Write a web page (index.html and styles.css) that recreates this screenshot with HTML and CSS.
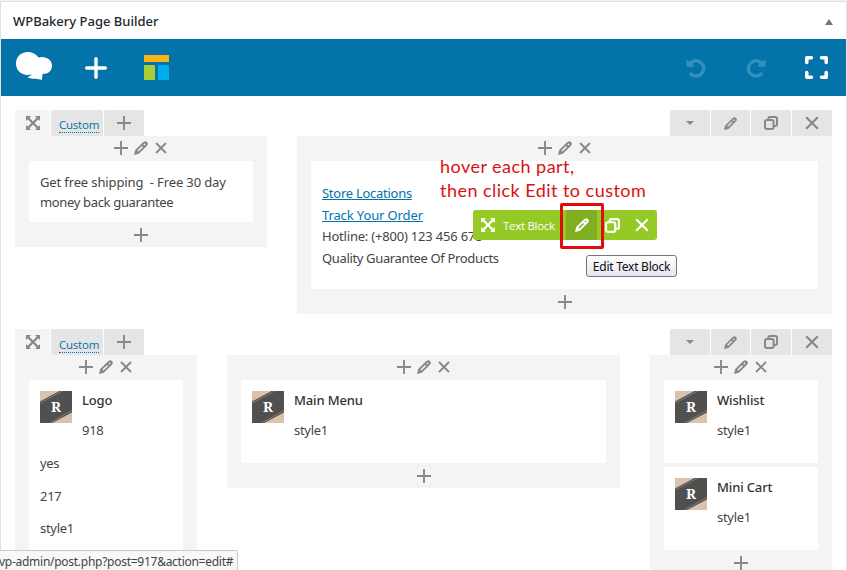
FILE: index.html
```html
<!DOCTYPE html>
<html lang="en">
<head>
<meta charset="utf-8">
<title>WPBakery Page Builder</title>
<link rel="stylesheet" href="styles.css">
</head>
<body>
<svg class="defs" aria-hidden="true">
  <symbol id="plus" viewBox="0 0 14 14"><path d="M7 0v14M0 7h14" fill="none" stroke="currentColor" stroke-width="1.9"/></symbol>
  <symbol id="close" viewBox="0 0 14 14"><path d="M1.2 1.200l11.600 11.600M12.800 1.200L1.200 12.800" fill="none" stroke="currentColor" stroke-width="2.200"/></symbol>
  <symbol id="pencil" viewBox="0 0 14 14"><path fill="currentColor" fill-rule="evenodd" d="M0 14L1.200 9.100 9.300 1Q11.300-.7 13 1T13 4.700L4.900 12.800ZM3.400 9.500L4.500 10.600 9.100 6 8 4.900ZM9.400 3.500L10.500 4.600 11.500 3.600 10.400 2.500Z"/></symbol>
  <symbol id="copy" viewBox="0 0 14 14"><g fill="none" stroke="currentColor" stroke-width="2"><rect x="1" y="4" width="8.600" height="9" rx="2"/><path d="M4.400 3.800V2.600Q4.400 1 6 1h5.300Q13 1 13 2.700v5.600Q13 10 11.400 10H10"/></g></symbol>
  <symbol id="move" viewBox="0 0 14 14"><path d="M2 2l10 10M12 2L2 12" stroke="currentColor" stroke-width="2.300"/><path fill="currentColor" d="M0 0h5L0 5zM14 0v5L9 0zM0 14V9l5 5zM14 14H9l5-5z"/></symbol>
  <symbol id="undo" viewBox="0 0 20 20"><path d="M4.500 5.200A7.600 7.600 0 1 1 4.800 16" fill="none" stroke="currentColor" stroke-width="3.500" stroke-linecap="round"/><path fill="currentColor" d="M.5 1.500v7.200h8.200L6.500 5.600 3 3z"/></symbol>
  <symbol id="thumb" viewBox="0 0 32 32"><path fill="#d9c3ad" d="M0 0h32v32H0z"/><path fill="#505050" d="M0 10.500L19.500 0H32v21.500L12 32H0z"/><path d="M0 12.200L22.500 0M9.500 32L32 19.500" stroke="#a08c7b" stroke-width=".7"/></symbol>
</svg>
<main class="panel">
  <header class="panel-head"><h2>WPBakery Page Builder</h2><span class="toggle"></span></header>
  <nav class="toolbar">
    <svg class="logo" viewBox="0 0 36 28"><path fill="#fff" d="M11.500 0C17 0 20.500 2.500 22.500 5.500 29.500 3.500 36 7.500 36 13.500c0 5-3.500 8.500-9.500 8.500L26 28c-4-1.500-9-.5-14.500-2.500l4.500-3C6 24.500 0 19 0 11.500 0 5 5 0 11.500 0z"/></svg>
    <svg class="add" viewBox="0 0 22 22"><path d="M11 1.700v18.600M1.700 11h18.600" stroke="#fff" stroke-width="3.400" stroke-linecap="round"/></svg>
    <svg class="template" viewBox="0 0 25 25"><path fill="#fcb316" d="M0 0h25v7H0z"/><path fill="#a9cd36" d="M0 10h11v15H0z"/><path fill="#00aeef" d="M14 10h11v15H14z"/></svg>
    <span class="spacer"></span>
    <svg class="history"><use href="#undo"/></svg>
    <svg class="history redo"><use href="#undo"/></svg>
    <svg class="full" viewBox="0 0 22 22"><path d="M1.700 6.200V1.700h4.500M15.800 1.700h4.500v4.500M20.300 15.800v4.500h-4.500M6.200 20.300H1.700v-4.500" fill="none" stroke="#fff" stroke-width="3.400" stroke-linecap="round" stroke-linejoin="round"/></svg>
  </nav>
  <div class="canvas">
    <section class="row first">
      <div class="tabs">
        <span class="tab drag"><svg class="i"><use href="#move"/></svg></span>
        <span class="tab custom"><a>Custom</a></span>
        <span class="tab"><svg class="i"><use href="#plus"/></svg></span>
        <span class="spacer"></span>
        <span class="tab"><i class="caret"></i></span>
        <span class="tab narrow"><svg class="i s13"><use href="#pencil"/></svg></span>
        <span class="tab"><svg class="i"><use href="#copy"/></svg></span>
        <span class="tab"><svg class="i"><use href="#close"/></svg></span>
      </div>
      <div class="columns">
        <div class="column shipping">
          <div class="controls"><svg class="i"><use href="#plus"/></svg><svg class="i"><use href="#pencil"/></svg><svg class="i s12"><use href="#close"/></svg></div>
          <article class="card text"><p><span class="l1">Get free shipping&nbsp; - Free 30 day</span><br><span class="l2">money back guarantee</span></p></article>
          <div class="append"><svg class="i"><use href="#plus"/></svg></div>
        </div>
        <div class="column contact">
          <div class="controls"><svg class="i"><use href="#plus"/></svg><svg class="i"><use href="#pencil"/></svg><svg class="i s12"><use href="#close"/></svg></div>
          <article class="card links"><p><a class="l3">Store Locations</a><br><a class="l4">Track Your Order</a><br><span class="l5">Hotline: (+800) 123 456 678</span><br><span class="l6">Quality Guarantee Of Products</span></p></article>
          <div class="append"><svg class="i"><use href="#plus"/></svg></div>
        </div>
      </div>
    </section>
    <section class="row">
      <div class="tabs">
        <span class="tab drag"><svg class="i"><use href="#move"/></svg></span>
        <span class="tab custom low"><a>Custom</a></span>
        <span class="tab"><svg class="i"><use href="#plus"/></svg></span>
        <span class="spacer"></span>
        <span class="tab"><i class="caret"></i></span>
        <span class="tab narrow"><svg class="i s13"><use href="#pencil"/></svg></span>
        <span class="tab"><svg class="i"><use href="#copy"/></svg></span>
        <span class="tab"><svg class="i"><use href="#close"/></svg></span>
      </div>
      <div class="columns">
        <div class="column side">
          <div class="controls"><svg class="i"><use href="#plus"/></svg><svg class="i"><use href="#pencil"/></svg><svg class="i s12"><use href="#close"/></svg></div>
          <article class="card element tall">
            <div class="media"><div class="thumb"><svg><use href="#thumb"/></svg><b>R</b></div><div><h4>Logo</h4><p>918</p></div></div>
            <p class="param">yes</p><p class="param">217</p><p class="param">style1</p>
          </article>
        </div>
        <div class="column menu">
          <div class="controls"><svg class="i"><use href="#plus"/></svg><svg class="i"><use href="#pencil"/></svg><svg class="i s12"><use href="#close"/></svg></div>
          <article class="card element"><div class="media"><div class="thumb"><svg><use href="#thumb"/></svg><b>R</b></div><div><h4>Main Menu</h4><p>style1</p></div></div></article>
          <div class="append"><svg class="i"><use href="#plus"/></svg></div>
        </div>
        <div class="column side">
          <div class="controls"><svg class="i"><use href="#plus"/></svg><svg class="i"><use href="#pencil"/></svg><svg class="i s12"><use href="#close"/></svg></div>
          <article class="card element"><div class="media"><div class="thumb"><svg><use href="#thumb"/></svg><b>R</b></div><div><h4>Wishlist</h4><p>style1</p></div></div></article>
          <article class="card element"><div class="media"><div class="thumb"><svg><use href="#thumb"/></svg><b>R</b></div><div><h4>Mini Cart</h4><p>style1</p></div></div></article>
          <div class="append"><svg class="i"><use href="#plus"/></svg></div>
        </div>
      </div>
    </section>
  </div>
</main>
<div class="note"><span>hover each part,</span><br><span>then click Edit to custom</span></div>
<div class="element-bar">
  <svg class="i"><use href="#move"/></svg><span class="name">Text Block</span>
  <span class="edit"><svg class="i"><use href="#pencil"/></svg></span>
  <span class="action"><svg class="i s15"><use href="#copy"/></svg></span>
  <span class="action"><svg class="i"><use href="#close"/></svg></span>
</div>
<div class="marker"></div>
<div class="tooltip">Edit Text Block</div>
<div class="status">vp-admin/post.php?post=917&amp;action=edit#</div>
</body>
</html>
```
FILE: styles.css
```css
* { box-sizing: border-box; }
body { margin: 0; width: 847px; height: 570px; overflow: hidden; position: relative; background: #f1f1f1; color: #444; font: 13px/21.5px "Noto Sans", sans-serif; padding-top: 1px; }
h2, h4, p { margin: 0; }
svg { display: block; flex: none; }
.defs { position: absolute; width: 0; height: 0; }
.i { width: 14px; height: 14px; }
.s12 { width: 12px; height: 12px; }
.s13 { width: 13px; height: 13px; }
.s15 { width: 15px; height: 15px; }
.spacer { flex: 1; }
.panel { height: 569px; overflow: hidden; border: 1px solid #e2e2e2; border-bottom: 0; background: #fff; }
.panel-head { height: 37px; padding: 2px 13px 0 12px; display: flex; align-items: center; justify-content: space-between; }
h2 { font-size: 13px; font-weight: 500; color: #23282d; white-space: nowrap; letter-spacing: 0; }
.toggle { border: 4px solid transparent; border-top: 0; border-bottom: 6px solid #72777c; }
.toolbar { height: 57px; padding: 0 18px 0 15px; background: #0473aa; display: flex; align-items: center; }
.logo { width: 36px; height: 28px; margin-top: -3px; }
.add { width: 22px; height: 22px; margin-left: 33px; }
.template { width: 25px; height: 25px; margin-left: 37px; }
.history { width: 20px; height: 20px; color: #338fbb; margin-right: 40px; }
.redo { transform: scaleX(-1); margin-right: 39px; }
.full { width: 23px; height: 23px; }
.canvas { padding: 14px; }
.row.first { height: 219px; }
.tabs { display: flex; gap: 1px; height: 26px; }
.tab { width: 40px; background: #e5e5e5; color: #888; display: flex; align-items: center; justify-content: center; border-radius: 2px 2px 0 0; }
.tab.narrow { width: 39px; }
.tab.drag { width: 35px; background: #f4f4f4; }
.tab.custom { width: 52px; padding: 4px 0 0 4px; }
.tab.low { padding-top: 6px; }
.custom a { font: 11.5px/14px "Open Sans", sans-serif; letter-spacing: -.2px; color: #0073aa; border-bottom: 1px dotted #0073aa; }
.caret { border: 4px solid transparent; border-top-color: #888; border-bottom: 0; }
.columns { display: flex; gap: 30px; align-items: flex-start; }
.column { background: #f4f4f4; padding: 0 14px; color: #888; }
.shipping { width: 252px; }
.contact { width: 535px; }
.side { width: 182px; }
.menu { width: 393px; }
.controls { height: 25px; padding-bottom: 1px; display: grid; grid-template-columns: repeat(3, 20px); justify-content: center; align-items: center; justify-items: center; }
.append { height: 25px; display: grid; place-items: center; padding-top: 1px; }
.card { background: #fff; border-radius: 2px; color: #444; white-space: nowrap; }
.card + .card { margin-top: 4px; }
.card.text { height: 61px; padding: 11px 11px; line-height: 20px; }
.links { height: 128px; padding: 22px 11px; }
.links a { color: #0073aa; text-decoration: underline; }
.l1 { letter-spacing: -.13px; }
.l2 { letter-spacing: -.34px; }
.l3 { letter-spacing: -.27px; }
.l4 { letter-spacing: -.12px; }
.l5 { letter-spacing: -.2px; }
.l6 { letter-spacing: -.35px; }
.element { height: 83px; padding: 10px 11px 0; }
.element.tall { height: 250px; }
.media { display: flex; gap: 10px; height: 62px; }
.media h4 { font-size: 13px; font-weight: 500; line-height: 20px; color: #333; margin-bottom: 10px; letter-spacing: -.15px; }
.media p { line-height: 20px; letter-spacing: -.3px; }
.thumb { width: 32px; height: 32px; margin-top: 1px; display: grid; flex: none; }
.thumb svg, .thumb b { grid-area: 1 / 1; width: 32px; height: 32px; }
.thumb b { font: bold 14px/32px "Noto Serif", "Liberation Serif", serif; color: #fff; text-align: center; }
.param { height: 32.5px; line-height: 22px; letter-spacing: -.3px; }
.note { position: absolute; left: 440px; top: 154px; color: #dc1010; font: 18px/24px Lato, sans-serif; letter-spacing: .46px; white-space: nowrap; }
.element-bar { position: absolute; left: 473px; top: 210px; width: 184px; height: 30px; padding-left: 8px; border-radius: 3px; background: #95c925; color: #fff; display: flex; align-items: center; }
.name { width: 71px; padding: 2px 0 0 8px; font: 11.5px/16px "Open Sans", sans-serif; letter-spacing: -.3px; white-space: nowrap; }
.edit { width: 31px; height: 30px; background: #7fae20; display: grid; place-items: center; }
.action { width: 30px; display: grid; place-items: center; }
.marker { position: absolute; left: 560px; top: 203px; width: 44px; height: 46px; border: 3px solid #e20a0a; border-radius: 2px; }
.tooltip { position: absolute; left: 586px; top: 255px; width: 91px; height: 22px; border: 1px solid #767676; border-radius: 3px; background: linear-gradient(#fff, #e5e5f1); color: #111; font: 12px/22px "Noto Sans", sans-serif; letter-spacing: -.25px; text-align: center; white-space: nowrap; }
.status { position: absolute; left: 0; top: 550px; width: 238px; height: 20px; border: 1px solid #c9c9c9; border-width: 1px 1px 0 0; border-radius: 0 2px 0 0; background: #f8f8f8; color: #444; font: 12px/22px "Noto Sans", sans-serif; letter-spacing: -.27px; white-space: nowrap; text-indent: -1px; }
```
